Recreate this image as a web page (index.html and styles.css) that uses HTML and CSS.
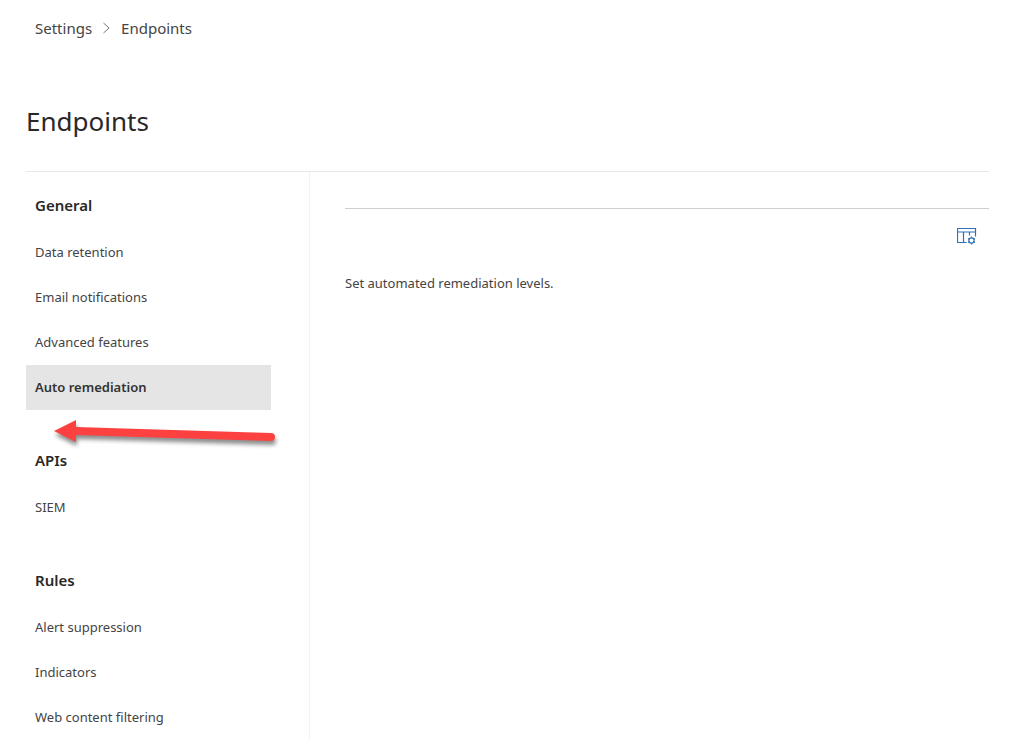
FILE: index.html
```html
<!DOCTYPE html>
<html lang="en">
<head>
  <meta charset="UTF-8">
  <meta name="viewport" content="width=device-width, initial-scale=1.0">
  <title>Endpoints - Settings</title>
  <link rel="stylesheet" href="styles.css">
</head>
<body>
  <!-- Breadcrumb -->
  <nav class="breadcrumb" aria-label="Breadcrumb">
    <a href="#">Settings</a>
    <svg class="chevron" width="9" height="12" viewBox="0 0 9 12" aria-hidden="true">
      <path d="M1.5 1l5.5 5L1.5 11" fill="none" stroke="#777" stroke-width="1"/>
    </svg>
    <a href="#">Endpoints</a>
  </nav>

  <h1>Endpoints</h1>

  <div class="layout">
    <!-- Side menu -->
    <nav class="side-menu" aria-label="Endpoint settings">
      <section>
        <h2>General</h2>
        <ul>
          <li><a href="#">Data retention</a></li>
          <li><a href="#">Email notifications</a></li>
          <li><a href="#">Advanced features</a></li>
          <li class="active">
            <a href="#" aria-current="page">Auto remediation</a>
            <svg class="arrow" width="232" height="36" viewBox="0 0 232 36" aria-hidden="true">
              <path d="M4 15L26 4V11L221 17A4 4 0 0 1 221 25L26 19V26Z" fill="#fd4040"/>
            </svg>
          </li>
        </ul>
      </section>
      <section>
        <h2>APIs</h2>
        <ul>
          <li><a href="#">SIEM</a></li>
        </ul>
      </section>
      <section>
        <h2>Rules</h2>
        <ul>
          <li><a href="#">Alert suppression</a></li>
          <li><a href="#">Indicators</a></li>
          <li><a href="#">Web content filtering</a></li>
        </ul>
      </section>
    </nav>

    <!-- Main Content -->
    <main class="content">
      <div class="toolbar">
        <button type="button" aria-label="Customize columns">
          <svg width="20" height="18" viewBox="0 0 20 18" fill="none" stroke="#2b72bd" stroke-width="1.2" aria-hidden="true">
            <path d="M9.5 15.5H.5V1.5H18.5V9.5M.5 5H18.5M6.5 5V15.5M12.5 5V8.5"/>
            <circle cx="14.5" cy="13.5" r="2.6"/>
            <path d="M14.5 9.5V11M14.5 16V17.5M11 11.5L12.3 12.2M16.7 14.8L18 15.5M11 15.5L12.3 14.8M16.7 12.2L18 11.5"/>
          </svg>
        </button>
      </div>
      <p>Set automated remediation levels.</p>
    </main>
  </div>
</body>
</html>
```

FILE: styles.css
```css
* {
  box-sizing: border-box;
}

body {
  font-family: 'Noto Sans', 'Open Sans', sans-serif;
  font-size: 13px;
  line-height: 20px;
  margin: 0;
  padding: 17px 35px 0 26px;
  height: 100vh;
  display: flex;
  flex-direction: column;
  background-color: #fff;
  color: #444;
}

a {
  color: inherit;
  text-decoration: none;
}

/* Breadcrumb */
.breadcrumb {
  display: flex;
  align-items: center;
  gap: 10px;
  padding-left: 9px;
  font-size: 15px;
  line-height: 22px;
}

h1 {
  margin: 63px 0 30px;
  font-size: 26px;
  font-weight: 400;
  line-height: 39px;
  color: #292827;
}

.layout {
  flex: 1;
  min-height: 0;
  display: flex;
  border-top: 1px solid #e8e8e8;
}

/* Side menu */
.side-menu {
  width: 284px;
  flex-shrink: 0;
  padding: 10px 38px 0 0;
  border-right: 1px solid #f2f2f2;
  overflow-y: auto;
  scrollbar-width: none;
}

.side-menu section {
  margin-bottom: 27px;
}

.side-menu h2 {
  margin: 0;
  padding: 11px 9px 13px;
  font-size: 15px;
  font-weight: 600;
  line-height: 24px;
  color: #292827;
}

.side-menu ul {
  list-style: none;
  margin: 0;
  padding: 0;
}

.side-menu li a {
  display: block;
  padding: 12px 9px;
  line-height: 21px;
}

.side-menu .active {
  position: relative;
  background-color: #e5e5e5;
  color: #333;
  font-weight: 600;
}

/* Red pointer lying over the menu */
.arrow {
  position: absolute;
  top: 51px;
  left: 24px;
  filter: drop-shadow(1px 4px 2px rgba(0, 0, 0, 0.45));
  pointer-events: none;
}

/* Main Content */
.content {
  flex: 1;
  padding: 36px 0 0 35px;
}

.toolbar {
  display: flex;
  justify-content: flex-end;
  border-top: 1px solid #cfcfcf;
  padding: 18px 12px 0 0;
}

.toolbar button {
  display: flex;
  padding: 0;
  border: none;
  background: none;
  cursor: pointer;
}

.content p {
  margin: 28px 0 0;
}
```
